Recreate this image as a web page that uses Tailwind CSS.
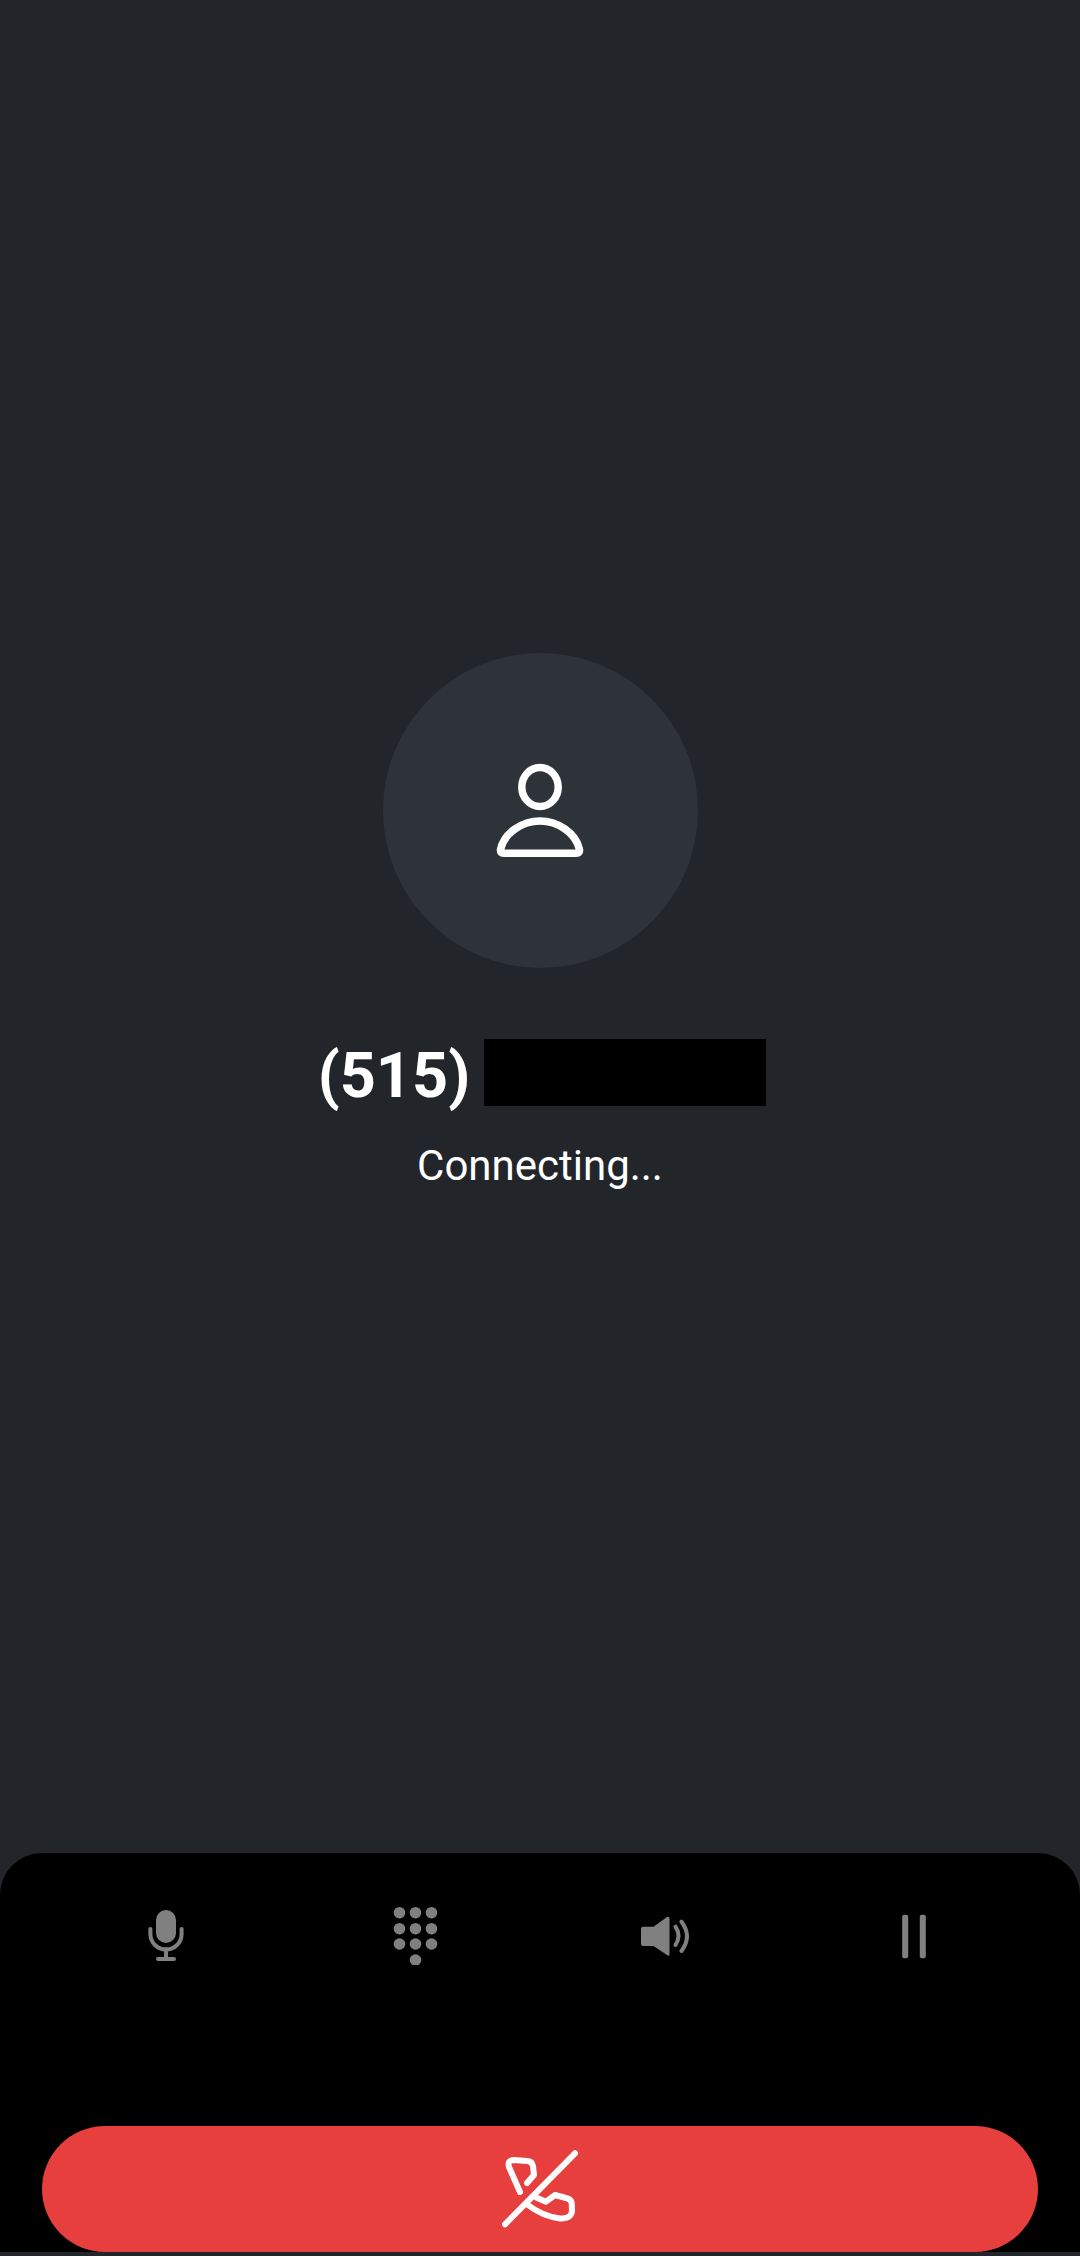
<!DOCTYPE html>
<html lang="en">
  <head>
    <meta charset="UTF-8" />
    <meta name="viewport" content="width=device-width, initial-scale=1.0" />
    <script src="https://cdn.jsdelivr.net/npm/@tailwindcss/browser@4"></script>
  </head>
  <body class="bg-[#2a2a2a]">
    <div class="w-[1080px] h-[2256px] flex flex-col bg-[#222529] font-['Roboto',sans-serif] text-white">
      <!-- Caller -->
      <div class="h-[1853px] flex flex-col items-center pt-[653px]">
        <div class="w-[315px] h-[315px] rounded-full bg-[#2e3339] flex items-center justify-center">
          <svg width="100" height="100" viewBox="-50 -50 100 100" fill="none" stroke="white" stroke-width="7.5" stroke-linejoin="round">
            <ellipse cx="0" cy="-24" rx="18.2" ry="19.5" />
            <path d="M-36 42.3H36Q40 42.3 39.5 38.5C36 22 18 10 0 10C-18 10-36 22-39.5 38.5Q-40 42.3-36 42.3Z" />
          </svg>
        </div>
        <div class="mt-[71px] h-[67px] flex items-center gap-[14px] pl-[4px]">
          <span class="mt-[6px] text-[63px] leading-[67px] font-bold">(515)</span>
          <div class="w-[282px] h-[67px] bg-black"></div>
        </div>
        <p class="mt-[35px] text-[42px] leading-[50px]">Connecting...</p>
      </div>

      <!-- Call controls -->
      <div class="h-[399px] rounded-t-[42px] bg-black px-[42px] pt-[52px] flex flex-col">
        <div class="grid grid-cols-4 justify-items-center">
          <svg width="60" height="60" viewBox="-29 -29 60 60" fill="none" stroke="#808080" stroke-width="4" stroke-linecap="round">
            <rect x="-10" y="-24" width="20" height="33" rx="10" fill="#808080" stroke="none" />
            <path d="M-15.6-5V0A15.6 15.6 0 0 0 15.6 0V-5" />
            <path d="M0 15V25M-8 25H8" />
          </svg>
          <svg width="60" height="60" viewBox="-29.5 -30 60 60" fill="#808080">
            <circle cx="-16" cy="-22.3" r="5.8" /><circle cx="0" cy="-22.3" r="5.8" /><circle cx="16" cy="-22.3" r="5.8" />
            <circle cx="-16" cy="-6.3" r="5.8" /><circle cx="0" cy="-6.3" r="5.8" /><circle cx="16" cy="-6.3" r="5.8" />
            <circle cx="-16" cy="9" r="5.8" /><circle cx="0" cy="9" r="5.8" /><circle cx="16" cy="9" r="5.8" />
            <circle cx="0" cy="25" r="5.8" />
          </svg>
          <svg width="60" height="60" viewBox="-30 -30 60 60" fill="none" stroke="#808080" stroke-width="4" stroke-linecap="round">
            <path d="M-22-8.3H-11.5L2-18Q4.5-19 4.5-16V19Q4.5 22 2 20L-11.5 11H-22Q-24 11-24 9V-6Q-24-8.3-22-8.3Z" fill="#808080" stroke="none" />
            <path d="M10.5-8.3Q16.5 1 10.5 10" />
            <path d="M16.5-13.3Q27.5 1.3 16.5 16" />
          </svg>
          <svg width="60" height="60" viewBox="-30 -30 60 60" fill="#808080">
            <rect x="-11.8" y="-20.3" width="6" height="43.5" rx="2" />
            <rect x="5.8" y="-20.3" width="6" height="43.5" rx="2" />
          </svg>
        </div>
        <button class="mt-auto w-[996px] h-[126px] rounded-full bg-[#e73e3e] flex items-center justify-center">
          <svg width="120" height="110" viewBox="0 4 120 110" fill="none" stroke="white" stroke-width="6" stroke-linecap="round" stroke-linejoin="round">
            <path d="M95 23.3L25 94.3" />
            <path d="M40 62L29 37Q27 30 34 30L47 31Q52 31 53 36L54 45L47 53" />
            <path d="M48 75Q62 86 80 88.5Q92 89 92 80L91.7 73Q91 69 86 68L75 65L66 71.7L56.7 67.7" />
          </svg>
        </button>
      </div>
      <div class="h-[4px]"></div>
    </div>
  </body>
</html>
